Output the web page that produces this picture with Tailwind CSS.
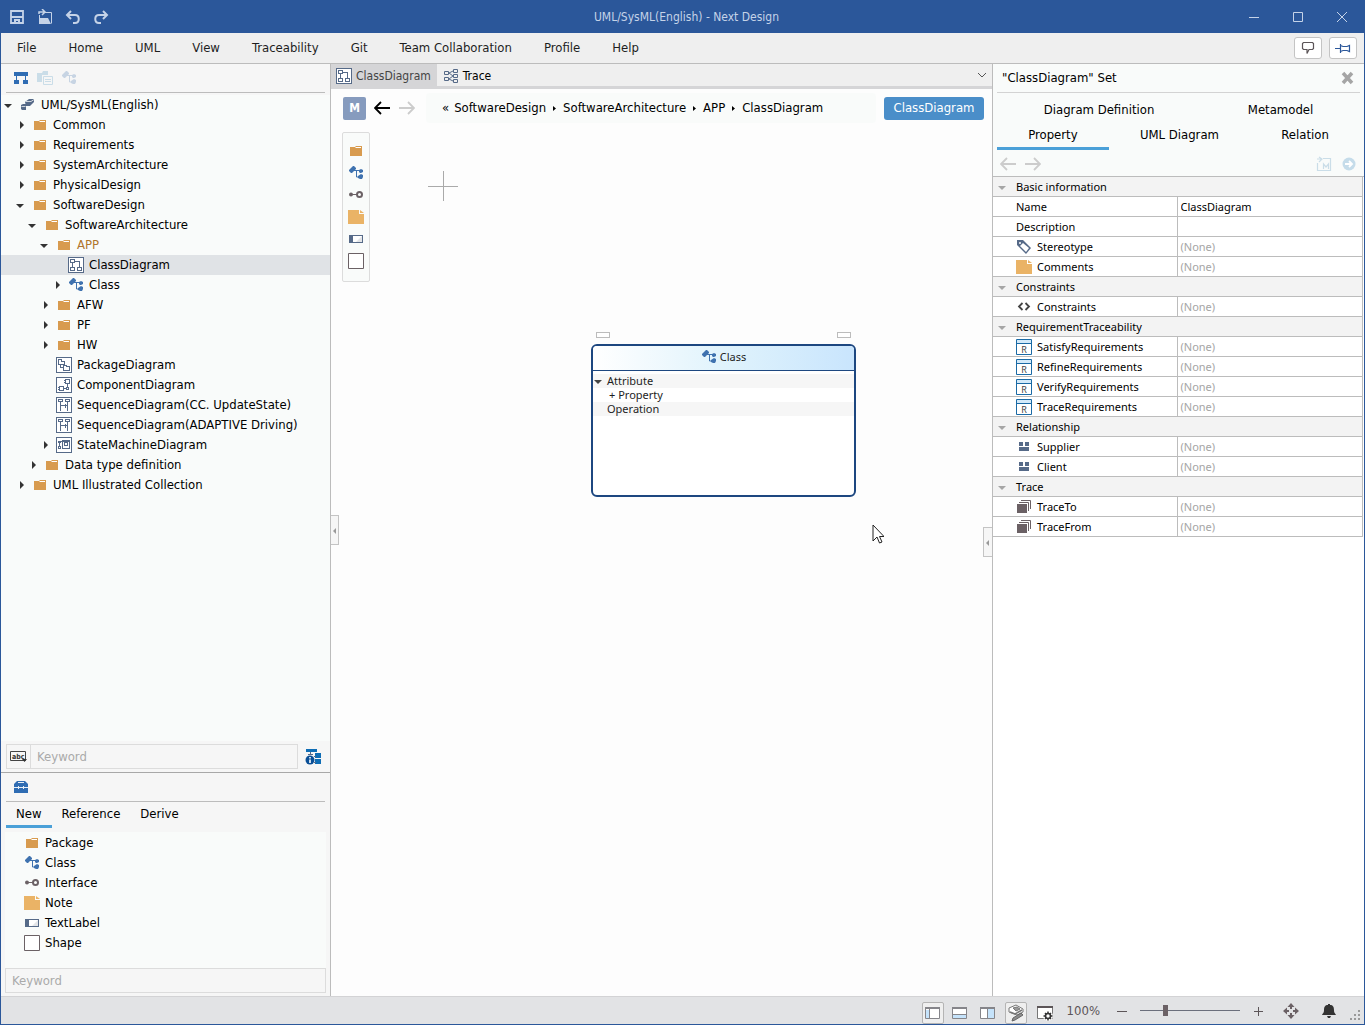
<!doctype html>
<html lang="en">
    <head>
        <meta charset="UTF-8" />
        <meta name="viewport" content="width=device-width, initial-scale=1.0" />
        <title>UML/SysML(English) - Next Design</title>
        <script src="https://cdn.jsdelivr.net/npm/@tailwindcss/browser@4"></script>
        <style>
            body {
                font-family: "DejaVu Sans Condensed", "Noto Sans", sans-serif;
            }
        </style>
    </head>
    <body
        class="h-screen flex flex-col overflow-hidden bg-white text-[13px] leading-5 text-black border-x border-b border-[#2b579a]"
    >
        <!-- Icon sprite -->
        <svg class="hidden" aria-hidden="true">
            <symbol id="folder" viewBox="0 0 16 16">
                <path d="M2 4h5l1-1h6v10H2z" fill="#d89b4f" />
                <path d="M7 5l1-1h5v1z" fill="#fff" />
            </symbol>
            <symbol id="class" viewBox="0 0 16 16">
                <path d="M1 5l4-4h1l2 2v1L4 8H3L1 6z" fill="#3f72af" />
                <path d="M6 5.500h6M8.500 6v6h3" fill="none" stroke="#3f72af" />
                <path d="M11 5l2-1 2 1v2l-2 1h-1l-1-1zM10 11l3-2 2 1v2l-1 2h-2l-2-1z" fill="#3f72af" />
            </symbol>
            <symbol id="project" viewBox="0 0 16 16">
                <path d="M5 5l4-3 5 0v3l-4 4H6z" fill="#566a88" />
                <path d="M6 4.500h5l3-2" fill="none" stroke="#f0f2f4" stroke-width=".8" />
                <path d="M1 8l2-1h3v6H2l-1-1z" fill="#566a88" />
                <path d="M1.500 9.500h4" stroke="#f0f2f4" stroke-width=".8" />
            </symbol>
            <symbol id="class-diagram" viewBox="0 0 16 16">
                <g fill="none" stroke="#566a88" shape-rendering="crispEdges">
                    <path d="M.5.5h15v15H.5z" fill="#fff" />
                    <path d="M2.500 2.500h4v3h-4zM2.500 10.500h4v3h-4zM9.500 10.500h4v3h-4zM4.500 6v4M7 4.500h4.500V10" />
                </g>
            </symbol>
            <symbol id="package-diagram" viewBox="0 0 16 16">
                <g fill="none" stroke="#566a88" shape-rendering="crispEdges">
                    <path d="M.5.5h15v15H.5z" fill="#fff" />
                    <path d="M2.500 2.500h3v2h3v3h-6zM7.500 8.500h3v1h3v4h-6zM4.500 8v2.500H7" />
                </g>
            </symbol>
            <symbol id="component-diagram" viewBox="0 0 16 16">
                <g fill="none" stroke="#566a88" shape-rendering="crispEdges">
                    <path d="M.5.5h15v15H.5z" fill="#fff" />
                    <path d="M9.500 2.500h4v4h-4zM8 3.500h2M8 5.500h2M3.500 9.500h4v4h-4zM2 10.500h2M2 12.500h2M8 11.500h3M11.500 7v3M10.500 10.500h2v2h-2z" />
                </g>
            </symbol>
            <symbol id="sequence-diagram" viewBox="0 0 16 16">
                <g fill="none" stroke="#566a88" shape-rendering="crispEdges">
                    <path d="M.5.5h15v15H.5z" fill="#fff" />
                    <path d="M2.500 2.500h4v2h-4zM9.500 2.500h4v2h-4zM4.500 5v9M11.500 5v9M5 8.500h6M9.500 6.500v4" />
                </g>
            </symbol>
            <symbol id="state-diagram" viewBox="0 0 16 16">
                <g fill="none" stroke="#566a88" shape-rendering="crispEdges">
                    <path d="M.5.5h15v15H.5z" fill="#fff" />
                    <path d="M6.500 3.500h7v8h-7zM8.500 5.500h3v3h-3zM2.500 9.500h2v2h-2zM3.500 6v3M4 4.500h3" />
                    <path d="M2 4h3v2H2zM6 3h8v2H6z" fill="#566a88" stroke="none" />
                </g>
            </symbol>
            <symbol id="trace-map" viewBox="0 0 16 16">
                <g fill="none" stroke="#566a88">
                    <path d="M1.500 3.500h4v3h-4zM1.500 9.500h4v3h-4zM10.500 1.500h4v3h-4zM10.500 6.500h4v3h-4zM10.500 11.500h4v3h-4z" />
                    <path d="M6 5l4-2M6 5l4 3M6 11l4-3M6 11l4 2" />
                </g>
            </symbol>
            <symbol id="interface" viewBox="0 0 16 16">
                <circle cx="3" cy="7.500" r="2" fill="#6b6165" />
                <path d="M4 7.500h5" stroke="#6b6165" />
                <circle cx="11.500" cy="7.500" r="2.500" fill="none" stroke="#6b6165" stroke-width="2" />
            </symbol>
            <symbol id="note" viewBox="0 0 16 16">
                <path d="M0 1h11v4h5v10H0z" fill="#eab366" />
                <path d="M12 1l4 3v0h-4z" fill="#eab366" />
            </symbol>
            <symbol id="text-label" viewBox="0 0 16 16">
                <path d="M1 4h14v8H1z" fill="#566a88" />
                <path d="M5 5h9v6H5z" fill="#fff" />
                <path d="M14 5v6H8z" fill="#e3e5e8" />
            </symbol>
            <symbol id="shape" viewBox="0 0 16 16">
                <path d="M.5.5h15v15H.5z" fill="#fff" stroke="#6b6165" />
            </symbol>
            <symbol id="tag" viewBox="0 0 16 16">
                <path d="M1 1h6l8 8-5 6-9-9z" fill="#566a88" />
                <path d="M7 4l6 5-3 4-6-6z" fill="#fff" />
                <circle cx="4" cy="4" r="1" fill="#fff" />
            </symbol>
            <symbol id="angles" viewBox="0 0 16 16">
                <path d="M6.500 4L3 7.500 6.500 11M9.500 4L13 7.500 9.500 11" fill="none" stroke="#444" stroke-width="1.800" />
            </symbol>
            <symbol id="requirement" viewBox="0 0 16 16">
                <path d="M.5.5h15v15H.5z" fill="#fff" stroke="#1a6aa5" />
                <path d="M1 1h14v3H1z" fill="#d3eafa" />
                <path d="M1 4.500h14" stroke="#1a6aa5" />
                <text x="8" y="14" font-size="9" text-anchor="middle" fill="#444">R</text>
            </symbol>
            <symbol id="relation" viewBox="0 0 16 16">
                <path d="M3 3h4v4H3zM9 3h4v4H9zM3 8h10v4H3z" fill="#566a88" />
            </symbol>
            <symbol id="stack" viewBox="0 0 16 16">
                <path d="M1 5h10v9H1z" fill="#6b6165" />
                <path d="M3 3.500h9.500V12M5 1.500h9.500V10" fill="none" stroke="#6b6165" />
            </symbol>
            <symbol id="arrow-left" viewBox="0 0 16 16">
                <path d="M1 8h15M7 2L1 8l6 6" fill="none" stroke="currentColor" stroke-width="1.800" />
            </symbol>
            <symbol id="arrow-right" viewBox="0 0 16 16">
                <path d="M0 8h15M9 2l6 6-6 6" fill="none" stroke="currentColor" stroke-width="1.800" />
            </symbol>
            <symbol id="open" viewBox="0 0 12 12">
                <path d="M0 5h8L4 9z" fill="currentColor" />
            </symbol>
            <symbol id="closed" viewBox="0 0 12 12">
                <path d="M4 2l4 4-4 4z" fill="currentColor" />
            </symbol>
        </svg>

        <!-- Title bar -->
        <header class="h-[33px] shrink-0 bg-[#2b579a] text-[#c5d3e8] flex items-center">
            <div class="flex-1 flex items-center gap-3 pl-2">
                <button aria-label="Save">
                    <svg class="size-4" viewBox="0 0 16 16">
                        <path d="M2 2h12v12H2zM2 8h12" fill="none" stroke="currentColor" stroke-width="1.800" />
                        <path d="M5 10h6v4H9v-2H7v2H5z" fill="currentColor" />
                    </svg>
                </button>
                <button aria-label="Open">
                    <svg class="size-4" viewBox="0 0 16 16">
                        <path d="M8 3.500h6.500v11M2.500 6v8" fill="none" stroke="currentColor" />
                        <path d="M2 9h9l3 6H2z" fill="currentColor" />
                        <path d="M2 5V3h5M5 0l3 3-3 3" fill="none" stroke="currentColor" stroke-width="1.500" />
                    </svg>
                </button>
                <button aria-label="Undo">
                    <svg class="size-4" viewBox="0 0 16 16">
                        <path d="M6 2L2 6l4 4M2 6h8c5 0 5 8 0 8H8" fill="none" stroke="currentColor" stroke-width="2" />
                    </svg>
                </button>
                <button aria-label="Redo">
                    <svg class="size-4" viewBox="0 0 16 16">
                        <path d="M10 2l4 4-4 4M14 6H6c-5 0-5 8 0 8h2" fill="none" stroke="currentColor" stroke-width="2" />
                    </svg>
                </button>
            </div>
            <h1 class="text-[12px]">UML/SysML(English) - Next Design</h1>
            <div class="flex-1 flex justify-end">
                <button class="w-11 flex justify-center" aria-label="Minimize">
                    <svg class="size-3" viewBox="0 0 12 12"><path d="M1 6.500h10" stroke="currentColor" /></svg>
                </button>
                <button class="w-11 flex justify-center" aria-label="Maximize">
                    <svg class="size-3" viewBox="0 0 12 12"><path d="M1.500 1.500h9v9h-9z" fill="none" stroke="currentColor" /></svg>
                </button>
                <button class="w-11 flex justify-center" aria-label="Close">
                    <svg class="size-3" viewBox="0 0 12 12"><path d="M1 1l10 10M11 1L1 11" stroke="currentColor" /></svg>
                </button>
            </div>
        </header>

        <!-- Menu bar -->
        <nav class="h-[31px] shrink-0 bg-[#efefef] border-b border-[#bcbcbc] flex items-center text-[#1e1e1e] pr-[7px]">
            <a href="#" class="px-4">File</a>
            <a href="#" class="px-4">Home</a>
            <a href="#" class="px-4">UML</a>
            <a href="#" class="px-4">View</a>
            <a href="#" class="px-4">Traceability</a>
            <a href="#" class="px-4">Git</a>
            <a href="#" class="px-4">Team Collaboration</a>
            <a href="#" class="px-4">Profile</a>
            <a href="#" class="px-4">Help</a>
            <div class="ml-auto flex gap-[7px]">
                <button class="w-7 h-[22px] bg-white border border-[#c4c4c4] rounded-[3px] flex items-center justify-center" aria-label="Feedback">
                    <svg class="size-4" viewBox="0 0 16 16">
                        <path d="M3.500 2.500h9l1 1v5l-1 1H9l-2 4v-4H3.500l-1-1v-5z" fill="none" stroke="#5c5558" stroke-width="1.200" />
                    </svg>
                </button>
                <button class="w-7 h-[22px] bg-white border border-[#c4c4c4] rounded-[3px] flex items-center justify-center" aria-label="Pin ribbon">
                    <svg class="size-4" viewBox="0 0 16 16">
                        <path d="M0 8.500h5M5.500 4v9M5.500 5.500L8 6.500h4l2.500-1v6l-2.500-1H8l-2.500 1" fill="none" stroke="#2b579a" stroke-width="1.200" />
                    </svg>
                </button>
            </div>
        </nav>

        <div class="flex-1 min-h-0 flex">
            <!-- Model navigator and toolbox -->
            <aside class="w-[330px] shrink-0 bg-[#f6f6f6] border-r border-[#bcbcbc] flex flex-col">
                <div class="h-[29px] mx-[5px] pl-[7px] border-b border-[#bcbcbc] flex items-center gap-2">
                    <button aria-label="Model view">
                        <svg class="size-4" viewBox="0 0 16 16">
                            <path d="M1 2h14v4H1zM1 10h5v4H1zM10 10h5v4h-5z" fill="#2f6cb3" />
                            <path d="M3.500 6v4M12.500 6v4" stroke="#2f6cb3" />
                        </svg>
                    </button>
                    <button aria-label="Paste" disabled>
                        <svg class="size-4" viewBox="0 0 16 16">
                            <path d="M0 3h5l1-2h5v4H5v7H0z" fill="#cadde8" />
                            <path d="M6.500 6.500h9v8h-9zM8 9.500h6M8 11.500h6" fill="none" stroke="#cadde8" />
                        </svg>
                    </button>
                    <button aria-label="Class view" disabled>
                        <svg class="size-4 opacity-25" viewBox="0 0 16 16"><use href="#class" /></svg>
                    </button>
                </div>
                <ul id="tree" class="flex-1 min-h-0 overflow-hidden mt-[2px] bg-[#f9fbfa]"></ul>
                <div class="h-[31px] pl-[5px] flex items-center">
                    <button class="w-[25px] h-[25px] border border-[#dcdcdc] flex items-center justify-center" aria-label="Search options">
                        <svg class="w-[18px] h-3" viewBox="0 0 18 12">
                            <path d="M.5.5h15v9H.5z" fill="none" stroke="#444" />
                            <text x="2" y="8" font-size="7" font-weight="700" fill="#333">abc</text>
                            <path d="M12 8h5l-2.500 3z" fill="#333" />
                        </svg>
                    </button>
                    <input
                        type="text"
                        aria-label="Search the model"
                        placeholder="Keyword"
                        class="w-[267px] h-[25px] border border-l-0 border-[#dcdcdc] px-[6px] placeholder:text-[#aaa]"
                    />
                    <button class="ml-[7px]" aria-label="Search scope">
                        <svg class="size-4" viewBox="0 0 16 16">
                            <path d="M1 0h11v3H1zM10 4h6v5h-6zM10 10h6v5h-6z" fill="#0f6db5" />
                            <path d="M5.500 3v3M3 5.500h5M9 7.500h2M9 13.500h2" stroke="#566a88" />
                            <circle cx="5" cy="11" r="4.500" fill="#0a4f97" />
                            <path d="M5 8v1.500M5 10.500v3.500" stroke="#fff" stroke-width="1.600" />
                        </svg>
                    </button>
                </div>

                <div class="border-t border-[#a8a8a8]">
                    <div class="h-[29px] mx-[5px] pl-[7px] border-b border-[#bcbcbc] flex items-center">
                        <button aria-label="Toolbox">
                            <svg class="size-4" viewBox="0 0 16 16">
                                <path d="M4 2h8l3 3v9H1V5z" fill="#2f6cb3" />
                                <path d="M5 3.500h6M1 8.500h14M5.500 7v3M10.500 7v3" stroke="#e8eff7" />
                            </svg>
                        </button>
                    </div>
                    <div class="flex px-[5px]" role="tablist">
                        <button class="px-[10px] h-[26px] border-b-[3px] border-[#4ba0d8]" role="tab">New</button>
                        <button class="px-[10px] h-[26px] border-b-[3px] border-transparent" role="tab">Reference</button>
                        <button class="px-[10px] h-[26px] border-b-[3px] border-transparent" role="tab">Derive</button>
                    </div>
                    <ul class="mt-1 mx-1 h-[136px] pl-[19px] pt-[1px] bg-[#f9fbfa]">
                        <li class="flex items-center gap-[5px] h-5"><svg class="size-4"><use href="#folder" /></svg>Package</li>
                        <li class="flex items-center gap-[5px] h-5"><svg class="size-4"><use href="#class" /></svg>Class</li>
                        <li class="flex items-center gap-[5px] h-5"><svg class="size-4"><use href="#interface" /></svg>Interface</li>
                        <li class="flex items-center gap-[5px] h-5"><svg class="size-4"><use href="#note" /></svg>Note</li>
                        <li class="flex items-center gap-[5px] h-5"><svg class="size-4"><use href="#text-label" /></svg>TextLabel</li>
                        <li class="flex items-center gap-[5px] h-5"><svg class="size-4"><use href="#shape" /></svg>Shape</li>
                    </ul>
                    <div class="px-1 pb-[3px]">
                        <input
                            type="text"
                            aria-label="Filter the toolbox"
                            placeholder="Keyword"
                            class="block w-full h-[25px] border border-[#dcdcdc] px-[6px] placeholder:text-[#aaa]"
                        />
                    </div>
                </div>
            </aside>

            <!-- Editor -->
            <main class="flex-1 min-w-0 bg-[#fdfdfd] flex flex-col relative">
                <div class="h-[25px] shrink-0 bg-[#efefef] border-b-[3px] border-[#d5d5d7] flex items-center pr-1">
                    <button class="h-full pl-[5px] pr-[6px] bg-[#d5d5d7] text-[#444] text-[12px] flex items-center gap-1 pt-[2px]">
                        <svg class="size-4"><use href="#class-diagram" /></svg>ClassDiagram
                    </button>
                    <button class="h-full px-[6px] text-[12px] flex items-center gap-1 pt-[2px]">
                        <svg class="size-4"><use href="#trace-map" /></svg>Trace
                    </button>
                    <button class="ml-auto" aria-label="Tab list">
                        <svg class="size-3" viewBox="0 0 12 12"><path d="M2 4l4 4 4-4" fill="none" stroke="#555" /></svg>
                    </button>
                </div>

                <div class="flex items-center pl-3 pr-2 pt-1">
                    <button class="size-[23px] rounded-[2px] bg-[#869bbe] text-white text-[12px] font-semibold">M</button>
                    <button class="ml-2" aria-label="Back"><svg class="size-4"><use href="#arrow-left" /></svg></button>
                    <button class="ml-[9px] text-[#ccc]" aria-label="Forward"><svg class="size-4"><use href="#arrow-right" /></svg></button>
                    <nav class="ml-[11px] mr-2 flex-1 h-[30px] pl-4 rounded bg-[#f9fbfa] flex items-center gap-[5px]" aria-label="Breadcrumb">
                        <span>«</span>
                        <a href="#">SoftwareDesign</a>
                        <svg class="w-[7px] h-3" viewBox="2 0 7 12"><path d="M4 4l3 2.500L4 9z" /></svg>
                        <a href="#">SoftwareArchitecture</a>
                        <svg class="w-[7px] h-3" viewBox="2 0 7 12"><path d="M4 4l3 2.500L4 9z" /></svg>
                        <a href="#">APP</a>
                        <svg class="w-[7px] h-3" viewBox="2 0 7 12"><path d="M4 4l3 2.500L4 9z" /></svg>
                        <a href="#">ClassDiagram</a>
                    </nav>
                    <button class="h-[23px] w-[100px] rounded-[3px] bg-[#4a8ec9] text-white">ClassDiagram</button>
                </div>

                <div class="ml-[11px] mt-[9px] w-7 h-[150px] border border-[#dcdcdc] rounded-[2px] bg-[#f9fbfa] flex flex-col items-center gap-[6px] pt-[10px]">
                    <button aria-label="Package"><svg class="size-4"><use href="#folder" /></svg></button>
                    <button aria-label="Class"><svg class="size-4"><use href="#class" /></svg></button>
                    <button aria-label="Interface"><svg class="size-4"><use href="#interface" /></svg></button>
                    <button aria-label="Note"><svg class="size-4"><use href="#note" /></svg></button>
                    <button aria-label="TextLabel"><svg class="size-4"><use href="#text-label" /></svg></button>
                    <button aria-label="Shape"><svg class="size-4"><use href="#shape" /></svg></button>
                </div>

                <!-- Canvas origin -->
                <svg class="absolute left-[97px] top-[107px] size-[30px]" viewBox="0 0 30 30">
                    <path d="M0 15.500h30M15.500 0v30" stroke="#aaa" />
                </svg>

                <!-- Class node -->
                <div class="absolute left-[265px] top-[268px] w-[14px] h-[6px] border border-[#bcbcbc] bg-white"></div>
                <div class="absolute left-[506px] top-[268px] w-[14px] h-[6px] border border-[#bcbcbc] bg-white"></div>
                <section class="absolute left-[260px] top-[280px] w-[265px] h-[153px] border-2 border-[#1d4780] rounded-md bg-white overflow-hidden font-['Noto_Sans'] text-[11px] leading-[14px] text-[#1e1e1e]">
                    <h2 class="h-[25px] pb-[2px] border-b border-[#1d4780] bg-linear-to-r from-white via-[#e0f3fc] to-[#c9e5fd] flex items-center justify-center gap-[3px]">
                        <svg class="size-4"><use href="#class" /></svg>Class
                    </h2>
                    <div class="mt-[3px] h-[14px] bg-[#f6f6f6] flex items-center">
                        <svg class="w-[14px] h-3 text-[#444]" viewBox="-1 0 14 12"><use href="#open" width="12" height="12" /></svg>Attribute
                    </div>
                    <div class="h-[14px] pl-4">+ Property</div>
                    <div class="h-[14px] pl-[14px] bg-[#f6f6f6]">Operation</div>
                </section>

                <!-- Mouse pointer -->
                <svg class="absolute left-[541px] top-[460px] w-3 h-[21px]" viewBox="0 0 12 21">
                    <path d="M1 1v16l4-4 2.500 6 2.500-1-2.500-5.500H12z" fill="#fff" stroke="#222" />
                </svg>

                <!-- Panel collapse handles -->
                <button class="absolute left-0 top-[451px] w-2 h-[30px] border border-l-0 border-[#c4c4c4] bg-[#f6f6f6]" aria-label="Collapse left panel">
                    <svg class="w-[7px] h-[7px]" viewBox="0 0 7 7"><path d="M5 1v6L2 4z" fill="#999" /></svg>
                </button>
                <button class="absolute right-0 top-[463px] w-[9px] h-[30px] border border-r-0 border-[#c4c4c4] bg-[#f6f6f6]" aria-label="Collapse right panel">
                    <svg class="w-[7px] h-[7px]" viewBox="0 0 7 7"><path d="M5 1v6L2 4z" fill="#999" /></svg>
                </button>
            </main>

            <!-- Inspector -->
            <aside class="w-[372px] shrink-0 border-l border-[#bcbcbc] bg-[#f9fbfa] flex flex-col">
                <div class="h-[29px] mx-1 px-[5px] border-b border-[#d3d3d3] flex items-center justify-between">
                    <h2>"ClassDiagram" Set</h2>
                    <button aria-label="Close inspector">
                        <svg class="size-[14px]" viewBox="0 0 14 14"><path d="M2 2l9 10M11 2L2 12" stroke="#a5a5a5" stroke-width="3.500" /></svg>
                    </button>
                </div>
                <div class="mx-1 pt-1" role="tablist">
                    <div class="flex">
                        <button class="flex-auto h-[26px]" role="tab">Diagram Definition</button>
                        <button class="flex-auto h-[26px]" role="tab">Metamodel</button>
                    </div>
                    <div class="flex">
                        <button class="flex-auto h-[27px] border-b-[3px] border-[#4ba0d8]" role="tab">Property</button>
                        <button class="flex-auto h-[27px] border-b-[3px] border-transparent" role="tab">UML Diagram</button>
                        <button class="flex-auto h-[27px] border-b-[3px] border-transparent" role="tab">Relation</button>
                    </div>
                </div>
                <div class="h-[26px] pl-[7px] pr-[7px] pt-[2px] flex items-center gap-[9px] text-[#ccc]">
                    <button aria-label="Previous"><svg class="size-4"><use href="#arrow-left" /></svg></button>
                    <button aria-label="Next"><svg class="size-4"><use href="#arrow-right" /></svg></button>
                    <button class="ml-auto" aria-label="Open metamodel" disabled>
                        <svg class="size-4" viewBox="0 0 16 16">
                            <path d="M7 2.500h7.500v12h-13V7M1 3h4M3 1l3 2-3 3" fill="none" stroke="#cadde8" stroke-width="1.200" />
                            <path d="M7.500 13V8l2.500 3 2.500-3v5" fill="none" stroke="#cadde8" stroke-width="1.200" />
                        </svg>
                    </button>
                    <button aria-label="Go to target" disabled>
                        <svg class="size-4" viewBox="0 0 16 16">
                            <circle cx="8" cy="8" r="6.500" fill="#c5dcea" />
                            <path d="M4 8h7M8 5l3 3-3 3" fill="none" stroke="#fff" stroke-width="1.800" />
                        </svg>
                    </button>
                </div>
                <div class="flex-1 min-h-0 overflow-hidden bg-white border-t border-[#bcbcbc]">
                    <table class="w-[370px] table-fixed border-separate border-spacing-0 border-r border-[#bcbcbc] font-['Noto_Sans'] text-[11px] leading-[19px]">
                        <tbody id="properties"></tbody>
                    </table>
                </div>
            </aside>
        </div>

        <!-- Status bar -->
        <footer class="h-[28px] shrink-0 bg-[#e2e3e5] border-t border-[#d3d3d5] flex items-center justify-end text-[#5c5558] pr-[3px]">
            <button class="w-[22px] h-[22px] mt-1 border border-[#b4b4b4] rounded-[2px] bg-[#efefef] flex items-center justify-center" aria-label="Toggle navigator">
                <svg class="size-4" viewBox="0 0 16 16">
                    <path d="M.5 3.500h14v10H.5z" fill="#fff" stroke="#85858a" />
                    <path d="M0 2h15v2H0z" fill="#85858a" /><path d="M1 5h3v8H1z" fill="#c5e3fb" /><path d="M4.500 4v9" stroke="#85858a" />
                </svg>
            </button>
            <button class="ml-2 mt-1" aria-label="Toggle bottom panel">
                <svg class="size-4" viewBox="0 0 16 16">
                    <path d="M.5 3.500h14v10H.5z" fill="#fff" stroke="#85858a" />
                    <path d="M0 2h15v2H0z" fill="#85858a" /><path d="M1 10h13v3H1z" fill="#c5e3fb" /><path d="M1 9.500h13" stroke="#85858a" />
                </svg>
            </button>
            <button class="ml-3 mt-1" aria-label="Toggle inspector">
                <svg class="size-4" viewBox="0 0 16 16">
                    <path d="M.5 3.500h14v10H.5z" fill="#fff" stroke="#85858a" />
                    <path d="M0 2h15v2H0z" fill="#85858a" /><path d="M8 4h6v9H8z" fill="#c5e3fb" /><path d="M7.500 4v9" stroke="#85858a" />
                </svg>
            </button>
            <button class="ml-[9px] w-[22px] h-[22px] mt-1 border border-[#b4b4b4] rounded-[2px] bg-[#efefef] flex items-center justify-center" aria-label="Highlight">
                <svg class="size-[18px]" viewBox="0 0 18 18">
                    <path d="M2 4l7-3 7 4v3l-6 3-8-3z" fill="#fff" stroke="#777" />
                    <path d="M6 4l4-1 3 2-4 2z" fill="#999" stroke="#777" />
                    <path d="M3 8l5 2 7-4" fill="none" stroke="#777" stroke-width="1.500" />
                    <path d="M14 9l-8 5-1 3 3-1 8-5z" fill="#8c8c8c" stroke="#666" />
                </svg>
            </button>
            <button class="ml-[9px] mt-1" aria-label="View settings">
                <svg class="size-[18px]" viewBox="0 0 18 18">
                    <path d="M1.500 3.500h15v11h-15z" fill="#fff" stroke="#777" /><path d="M1 2h16v2H1z" fill="#5c5558" />
                    <circle cx="12" cy="12" r="5" fill="#fff" />
                    <circle cx="12" cy="12" r="2.500" fill="none" stroke="#333" stroke-width="1.600" />
                    <path d="M12 7.500v2M12 14.500v2M7.500 12h2M14.500 12h2M9 9l1 1M14 14l1 1M15 9l-1 1M10 14l-1 1" stroke="#333" stroke-width="1.500" />
                </svg>
            </button>
            <label for="zoom" class="ml-[13px]">100%</label>
            <button class="ml-4" aria-label="Zoom out"><svg class="size-3" viewBox="0 0 12 12"><path d="M1 6.500h10" stroke="currentColor" /></svg></button>
            <input
                id="zoom"
                type="range"
                min="0"
                max="100"
                value="24"
                class="ml-3 w-[100px] h-3 appearance-none bg-transparent [&::-webkit-slider-runnable-track]:h-px [&::-webkit-slider-runnable-track]:bg-[#6b6f7c] [&::-webkit-slider-thumb]:appearance-none [&::-webkit-slider-thumb]:w-[5px] [&::-webkit-slider-thumb]:h-[11px] [&::-webkit-slider-thumb]:-mt-[5px] [&::-webkit-slider-thumb]:bg-[#6b6165]"
            />
            <button class="ml-3" aria-label="Zoom in"><svg class="size-3" viewBox="0 0 12 12"><path d="M2 6.500h9M6.500 2v9" stroke="currentColor" /></svg></button>
            <button class="ml-[19px]" aria-label="Fit to window">
                <svg class="size-4" viewBox="0 0 16 16">
                    <path d="M8 0l3.500 4H9v2H7V4H4.500zM8 16l3.500-4H9v-2H7v2H4.500zM0 8l4-3.500V7h2v2H4v2.500zM16 8l-4-3.500V7h-2v2h2v2.500z" fill="#6b6165" />
                </svg>
            </button>
            <button class="ml-[22px]" aria-label="Notifications">
                <svg class="size-4" viewBox="0 0 16 16">
                    <path d="M7 1h2v1c3 0 4 2 4 5 0 3 1 3 2 5H1c1-2 2-2 2-5 0-3 1-5 4-5zM6 13h4l-1 2H7z" fill="#333" />
                </svg>
            </button>
            <svg class="ml-3 mt-2 size-3" viewBox="0 0 12 12">
                <path d="M9 1h2v2H9zM5 5h2v2H5zM9 5h2v2H9zM1 9h2v2H1zM5 9h2v2H5zM9 9h2v2H9z" fill="#999" />
            </svg>
        </footer>

        <script>
            // [depth, label, icon, state of the expander]
            const tree = [
                [0, "UML/SysML(English)", "project", "open"],
                [1, "Common", "folder", "closed"],
                [1, "Requirements", "folder", "closed"],
                [1, "SystemArchitecture", "folder", "closed"],
                [1, "PhysicalDesign", "folder", "closed"],
                [1, "SoftwareDesign", "folder", "open"],
                [2, "SoftwareArchitecture", "folder", "open"],
                [3, "APP", "folder", "open", "text-[#b0752b]"],
                [4, "ClassDiagram", "class-diagram", "", "bg-[#e0e3e6]"],
                [4, "Class", "class", "closed"],
                [3, "AFW", "folder", "closed"],
                [3, "PF", "folder", "closed"],
                [3, "HW", "folder", "closed"],
                [3, "PackageDiagram", "package-diagram", ""],
                [3, "ComponentDiagram", "component-diagram", ""],
                [3, "SequenceDiagram(CC. UpdateState)", "sequence-diagram", ""],
                [3, "SequenceDiagram(ADAPTIVE Driving)", "sequence-diagram", ""],
                [3, "StateMachineDiagram", "state-diagram", "closed"],
                [2, "Data type definition", "folder", "closed"],
                [1, "UML Illustrated Collection", "folder", "closed"],
            ];
            document.getElementById("tree").innerHTML = tree
                .map(
                    ([depth, label, icon, state, extra = ""]) => `
                <li class="flex items-center h-5 whitespace-nowrap ${extra}" style="padding-left: ${3 + depth * 12}px">
                    <svg class="size-3 mr-1 text-[#333]">${state ? `<use href="#${state}" />` : ""}</svg>
                    <svg class="size-4 mr-[5px]"><use href="#${icon}" /></svg>${label}
                </li>`,
                )
                .join("");

            const groups = [
                ["Basic information", [["Name", "", "ClassDiagram"], ["Description", "", ""], ["Stereotype", "tag"], ["Comments", "note"]]],
                ["Constraints", [["Constraints", "angles"]]],
                [
                    "RequirementTraceability",
                    [
                        ["SatisfyRequirements", "requirement"],
                        ["RefineRequirements", "requirement"],
                        ["VerifyRequirements", "requirement"],
                        ["TraceRequirements", "requirement"],
                    ],
                ],
                ["Relationship", [["Supplier", "relation"], ["Client", "relation"]]],
                ["Trace", [["TraceTo", "stack"], ["TraceFrom", "stack"]]],
            ];
            document.getElementById("properties").innerHTML = groups
                .map(
                    ([title, rows]) => `
                <tr class="h-5 bg-[#f3f3f3]">
                    <th colspan="2" class="p-0 font-normal text-left border-b border-[#bcbcbc]">
                        <div class="flex items-center pl-[5px]">
                            <svg class="w-[18px] h-3 text-[#a5a5a5]" viewBox="0 0 18 12"><use href="#open" width="12" height="12" /></svg>${title}
                        </div>
                    </th>
                </tr>
                ${rows
                    .map(
                        ([name, icon, value]) => `
                    <tr class="h-5">
                        <th class="p-0 font-normal text-left border-r border-b border-[#bcbcbc]">
                            <div class="flex items-center pl-[23px]">
                                ${icon ? `<svg class="size-4 mr-[5px]"><use href="#${icon}" /></svg>` : ""}${name}
                            </div>
                        </th>
                        <td class="p-0 pl-[3px] border-b border-[#bcbcbc]">${
                            value === undefined
                                ? `<span class="text-[#a5a5a5]">(None)</span>`
                                : `<input type="text" aria-label="${name}" value="${value}" class="block w-full h-[19px]" />`
                        }</td>
                    </tr>`,
                    )
                    .join("")}`,
                )
                .join("");
        </script>
    </body>
</html>
